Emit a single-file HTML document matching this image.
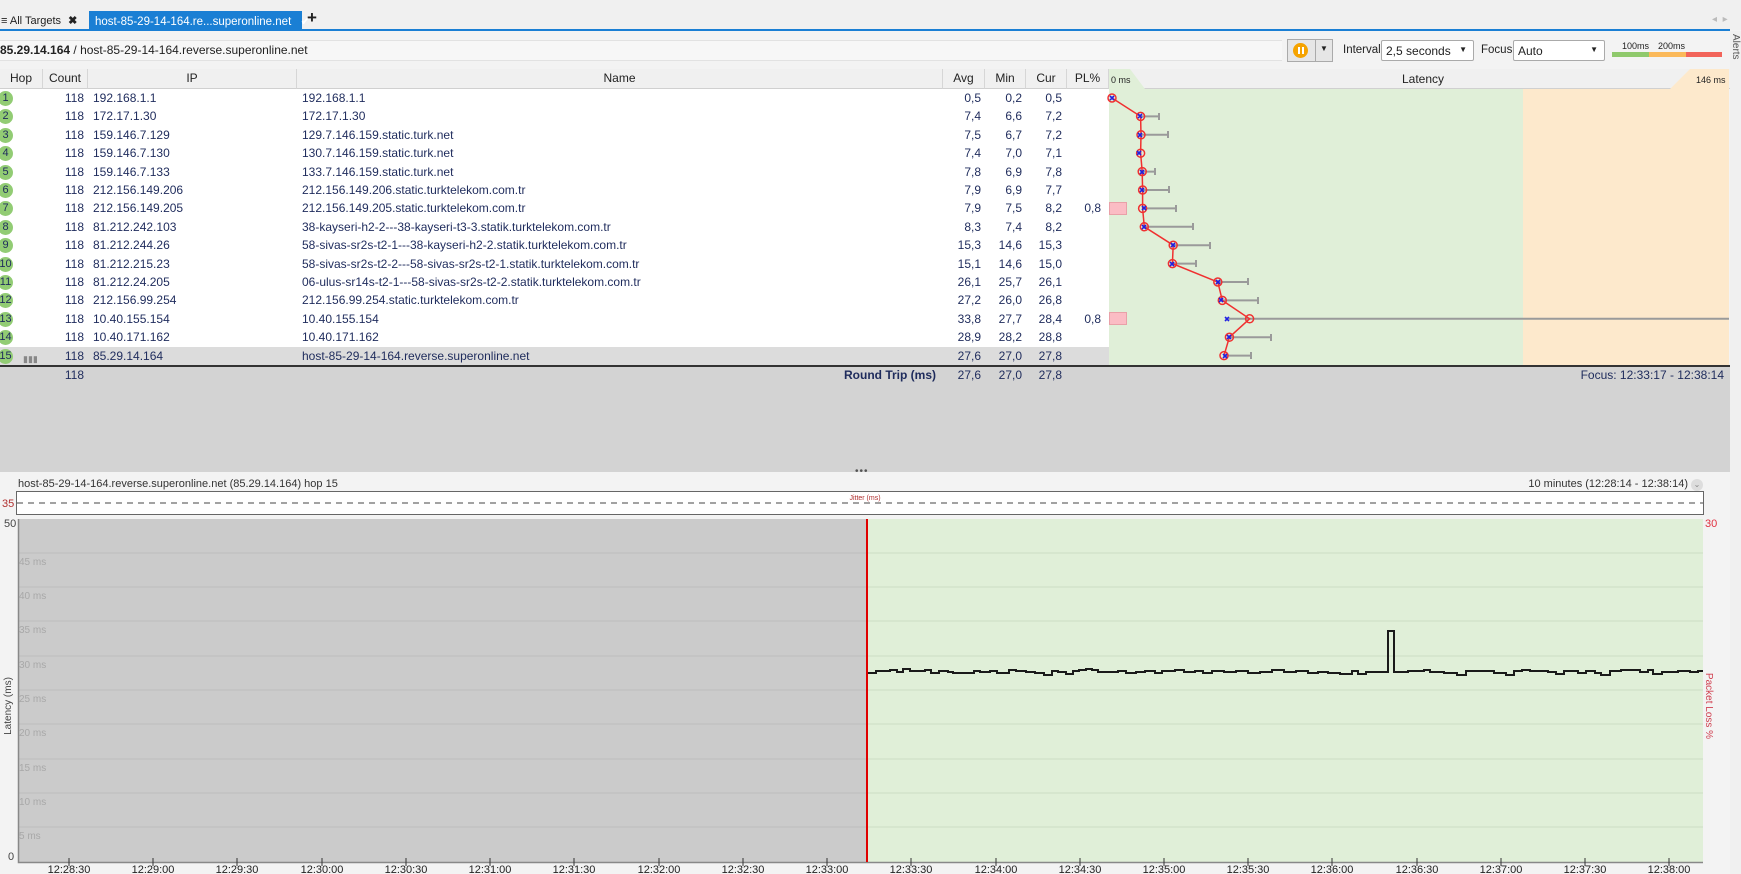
<!DOCTYPE html>
<html><head><meta charset="utf-8">
<style>
*{margin:0;padding:0;box-sizing:border-box}
body{width:1741px;height:874px;overflow:hidden;background:#f3f3f3;font-family:"Liberation Sans",sans-serif;font-size:12px;color:#1e2b5c;position:relative}
.a{position:absolute;white-space:nowrap}
.r{text-align:right}
.row{position:absolute;left:0;width:1109px;height:18.4px;background:#fff}
.row div{position:absolute;top:2px;line-height:14px}
.hop{left:-2px;top:2px!important;width:15px;height:15px;border-radius:8px;background:#92cc74;color:#1e2b5c;font-size:11px;line-height:15px!important;text-align:center}
.hd{position:absolute;top:69px;height:20px;background:#f0f0f0;border-right:1px solid #d6d6d6;border-bottom:1px solid #d0d0d0;color:#222;text-align:center;line-height:19px;font-size:12px}
</style></head><body>

<!-- tab bar -->
<div class="a" style="left:0;top:0;width:1741px;height:30px;background:#f0f0f0"></div>
<div class="a" style="left:0;top:29px;width:1730px;height:2px;background:#1a7fd4"></div>
<div class="a" style="left:1px;top:14px;color:#222;font-size:11px">≡ All Targets <b style="margin-left:4px">✖</b></div>
<div class="a" style="left:89px;top:11px;width:213px;height:19px;background:#1a7fd4;color:#fff;padding:3px 6px;font-size:11.5px">host-85-29-14-164.re...superonline.net <span style="margin-left:6px">✔</span></div>
<div class="a" style="left:307px;top:8px;font-size:17px;font-weight:bold;color:#222">+</div>
<div class="a" style="left:1712px;top:14px;color:#bbb;font-size:10px">◂ &nbsp;▸</div>

<!-- toolbar -->
<div class="a" style="left:0;top:40px;width:1282px;height:21px;background:#f7f7f7;border-top:1px solid #e2e2e2;border-bottom:1px solid #e2e2e2"></div>
<div class="a" style="left:0;top:43px;font-size:12px;color:#222"><b>85.29.14.164</b> / host-85-29-14-164.reverse.superonline.net</div>
<div class="a" style="left:1287px;top:39px;width:46px;height:23px;border:1px solid #aaa;background:#e6e6e6"></div>
<div class="a" style="left:1315px;top:39px;width:1px;height:23px;background:#aaa"></div>
<div class="a" style="left:1293px;top:43px;width:15px;height:15px;border-radius:8px;background:#f5a300"></div>
<div class="a" style="left:1298px;top:47px;width:2px;height:7px;background:#fff"></div>
<div class="a" style="left:1302px;top:47px;width:2px;height:7px;background:#fff"></div>
<div class="a" style="left:1320px;top:44px;font-size:8px;color:#222">▼</div>
<div class="a" style="left:1343px;top:44px;color:#222;font-size:11.5px">Interval</div>
<div class="a" style="left:1381px;top:40px;width:93px;height:21px;background:#fff;border:1px solid #aaa;border-radius:2px;padding:3px 4px;color:#222">2,5 seconds<span style="position:absolute;right:6px;top:4px;font-size:8px">▼</span></div>
<div class="a" style="left:1481px;top:44px;color:#222;font-size:11.5px">Focus</div>
<div class="a" style="left:1513px;top:40px;width:92px;height:21px;background:#fff;border:1px solid #aaa;border-radius:2px;padding:3px 4px;color:#222">Auto<span style="position:absolute;right:6px;top:4px;font-size:8px">▼</span></div>
<div class="a" style="left:1622px;top:41px;font-size:9px;color:#222">100ms</div>
<div class="a" style="left:1658px;top:41px;font-size:9px;color:#222">200ms</div>
<div class="a" style="left:1612px;top:52px;width:37px;height:5px;background:#8fc96c"></div>
<div class="a" style="left:1649px;top:52px;width:37px;height:5px;background:#fbb95a"></div>
<div class="a" style="left:1686px;top:52px;width:36px;height:5px;background:#f2645a"></div>
<div class="a" style="left:1730px;top:31px;width:11px;height:843px;background:#f0f0f0"></div>
<div class="a" style="left:1727px;top:34px;font-size:10px;color:#555;transform-origin:0 0;transform:translate(14px,0) rotate(90deg)">Alerts</div>

<!-- table headers -->
<div class="hd" style="left:0;width:43px">Hop</div>
<div class="hd" style="left:43px;width:45px">Count</div>
<div class="hd" style="left:88px;width:209px">IP</div>
<div class="hd" style="left:297px;width:646px">Name</div>
<div class="hd" style="left:943px;width:42px">Avg</div>
<div class="hd" style="left:985px;width:41px">Min</div>
<div class="hd" style="left:1026px;width:41px">Cur</div>
<div class="hd" style="left:1067px;width:42px">PL%</div>
<div class="hd" style="left:1109px;width:621px;background:#f0f0f0;border-right:none"></div>

<!-- graph bg -->
<svg class="a" style="left:0;top:0" width="1741" height="874">
<polygon points="1109,69 1130,69 1145,89 1109,89" fill="#e0efd8"/>
<polygon points="1690,69 1729,69 1729,89 1670,89" fill="#fde9cc"/>
<rect x="1109" y="89" width="414" height="276" fill="#e0efd8"/>
<rect x="1523" y="89" width="206" height="276" fill="#fde9cc"/>
</svg>
<div class="a" style="left:1111px;top:75px;font-size:9px;color:#222">0 ms</div>
<div class="a" style="left:1402px;top:72px;color:#222">Latency</div>
<div class="a" style="left:1696px;top:75px;font-size:9px;color:#222">146 ms</div>

<!-- rows -->
<div class="row" style="top:89px"><div class="hop">1</div><div class="r" style="left:43px;width:41px">118</div><div style="left:93px">192.168.1.1</div><div style="left:302px">192.168.1.1</div><div class="r" style="left:943px;width:38px">0,5</div><div class="r" style="left:985px;width:37px">0,2</div><div class="r" style="left:1026px;width:36px">0,5</div></div>
<div class="row" style="top:107.4px"><div class="hop">2</div><div class="r" style="left:43px;width:41px">118</div><div style="left:93px">172.17.1.30</div><div style="left:302px">172.17.1.30</div><div class="r" style="left:943px;width:38px">7,4</div><div class="r" style="left:985px;width:37px">6,6</div><div class="r" style="left:1026px;width:36px">7,2</div></div>
<div class="row" style="top:125.8px"><div class="hop">3</div><div class="r" style="left:43px;width:41px">118</div><div style="left:93px">159.146.7.129</div><div style="left:302px">129.7.146.159.static.turk.net</div><div class="r" style="left:943px;width:38px">7,5</div><div class="r" style="left:985px;width:37px">6,7</div><div class="r" style="left:1026px;width:36px">7,2</div></div>
<div class="row" style="top:144.2px"><div class="hop">4</div><div class="r" style="left:43px;width:41px">118</div><div style="left:93px">159.146.7.130</div><div style="left:302px">130.7.146.159.static.turk.net</div><div class="r" style="left:943px;width:38px">7,4</div><div class="r" style="left:985px;width:37px">7,0</div><div class="r" style="left:1026px;width:36px">7,1</div></div>
<div class="row" style="top:162.6px"><div class="hop">5</div><div class="r" style="left:43px;width:41px">118</div><div style="left:93px">159.146.7.133</div><div style="left:302px">133.7.146.159.static.turk.net</div><div class="r" style="left:943px;width:38px">7,8</div><div class="r" style="left:985px;width:37px">6,9</div><div class="r" style="left:1026px;width:36px">7,8</div></div>
<div class="row" style="top:181px"><div class="hop">6</div><div class="r" style="left:43px;width:41px">118</div><div style="left:93px">212.156.149.206</div><div style="left:302px">212.156.149.206.static.turktelekom.com.tr</div><div class="r" style="left:943px;width:38px">7,9</div><div class="r" style="left:985px;width:37px">6,9</div><div class="r" style="left:1026px;width:36px">7,7</div></div>
<div class="row" style="top:199.4px"><div class="hop">7</div><div class="r" style="left:43px;width:41px">118</div><div style="left:93px">212.156.149.205</div><div style="left:302px">212.156.149.205.static.turktelekom.com.tr</div><div class="r" style="left:943px;width:38px">7,9</div><div class="r" style="left:985px;width:37px">7,5</div><div class="r" style="left:1026px;width:36px">8,2</div><div class="r" style="left:1067px;width:34px">0,8</div></div>
<div class="row" style="top:217.8px"><div class="hop">8</div><div class="r" style="left:43px;width:41px">118</div><div style="left:93px">81.212.242.103</div><div style="left:302px">38-kayseri-h2-2---38-kayseri-t3-3.statik.turktelekom.com.tr</div><div class="r" style="left:943px;width:38px">8,3</div><div class="r" style="left:985px;width:37px">7,4</div><div class="r" style="left:1026px;width:36px">8,2</div></div>
<div class="row" style="top:236.2px"><div class="hop">9</div><div class="r" style="left:43px;width:41px">118</div><div style="left:93px">81.212.244.26</div><div style="left:302px">58-sivas-sr2s-t2-1---38-kayseri-h2-2.statik.turktelekom.com.tr</div><div class="r" style="left:943px;width:38px">15,3</div><div class="r" style="left:985px;width:37px">14,6</div><div class="r" style="left:1026px;width:36px">15,3</div></div>
<div class="row" style="top:254.6px"><div class="hop">10</div><div class="r" style="left:43px;width:41px">118</div><div style="left:93px">81.212.215.23</div><div style="left:302px">58-sivas-sr2s-t2-2---58-sivas-sr2s-t2-1.statik.turktelekom.com.tr</div><div class="r" style="left:943px;width:38px">15,1</div><div class="r" style="left:985px;width:37px">14,6</div><div class="r" style="left:1026px;width:36px">15,0</div></div>
<div class="row" style="top:273px"><div class="hop">11</div><div class="r" style="left:43px;width:41px">118</div><div style="left:93px">81.212.24.205</div><div style="left:302px">06-ulus-sr14s-t2-1---58-sivas-sr2s-t2-2.statik.turktelekom.com.tr</div><div class="r" style="left:943px;width:38px">26,1</div><div class="r" style="left:985px;width:37px">25,7</div><div class="r" style="left:1026px;width:36px">26,1</div></div>
<div class="row" style="top:291.4px"><div class="hop">12</div><div class="r" style="left:43px;width:41px">118</div><div style="left:93px">212.156.99.254</div><div style="left:302px">212.156.99.254.static.turktelekom.com.tr</div><div class="r" style="left:943px;width:38px">27,2</div><div class="r" style="left:985px;width:37px">26,0</div><div class="r" style="left:1026px;width:36px">26,8</div></div>
<div class="row" style="top:309.8px"><div class="hop">13</div><div class="r" style="left:43px;width:41px">118</div><div style="left:93px">10.40.155.154</div><div style="left:302px">10.40.155.154</div><div class="r" style="left:943px;width:38px">33,8</div><div class="r" style="left:985px;width:37px">27,7</div><div class="r" style="left:1026px;width:36px">28,4</div><div class="r" style="left:1067px;width:34px">0,8</div></div>
<div class="row" style="top:328.2px"><div class="hop">14</div><div class="r" style="left:43px;width:41px">118</div><div style="left:93px">10.40.171.162</div><div style="left:302px">10.40.171.162</div><div class="r" style="left:943px;width:38px">28,9</div><div class="r" style="left:985px;width:37px">28,2</div><div class="r" style="left:1026px;width:36px">28,8</div></div>
<div class="row" style="top:346.6px;background:#dcdcdc"><div class="hop">15</div><div style="left:23px;top:5px;font-size:9px;color:#888">▮▮▮</div><div class="r" style="left:43px;width:41px">118</div><div style="left:93px">85.29.14.164</div><div style="left:302px">host-85-29-14-164.reverse.superonline.net</div><div class="r" style="left:943px;width:38px">27,6</div><div class="r" style="left:985px;width:37px">27,0</div><div class="r" style="left:1026px;width:36px">27,8</div></div>

<!-- pink PL boxes -->
<div class="a" style="left:1109px;top:202px;width:18px;height:13px;background:#fbbcc4;border:1px solid #e9a0a8"></div>
<div class="a" style="left:1109px;top:312px;width:18px;height:13px;background:#fbbcc4;border:1px solid #e9a0a8"></div>

<!-- hop graph -->
<svg class="a" style="left:0;top:0" width="1741" height="874">
<g stroke="#9a9a9a" stroke-width="2">
<path d="M1140 116.4H1159M1159 113v7M1141 134.8H1168M1168 131v7M1142 171.6H1155M1155 168v7M1143 190H1169M1169 186v7M1143 208.4H1176M1176 205v7M1144 226.8H1193M1193 223v7M1173 245.2H1210M1210 242v7M1172 263.6H1196M1196 260v7M1218 282H1248M1248 278v7M1222 300.4H1258M1258 297v7M1250 318.8H1729M1229 318.8H1250M1229 337.2H1271M1271 334v7M1224 355.6H1251M1251 352v7"/>
</g>
<polyline fill="none" stroke="#f03030" stroke-width="1.5" points="1112,98 1140.6,116.4 1141,134.8 1140.6,153.2 1142.2,171.6 1142.6,190 1142.6,208.4 1144.3,226.8 1173.2,245.2 1172.4,263.6 1217.8,282 1222.3,300.4 1249.6,318.8 1229.4,337.2 1224,355.6"/>
<g fill="none" stroke="#f03030" stroke-width="1.5">
<circle cx="1112" cy="98" r="4"/><circle cx="1140.6" cy="116.4" r="4"/><circle cx="1141" cy="134.8" r="4"/><circle cx="1140.6" cy="153.2" r="4"/><circle cx="1142.2" cy="171.6" r="4"/><circle cx="1142.6" cy="190" r="4"/><circle cx="1142.6" cy="208.4" r="4"/><circle cx="1144.3" cy="226.8" r="4"/><circle cx="1173.2" cy="245.2" r="4"/><circle cx="1172.4" cy="263.6" r="4"/><circle cx="1217.8" cy="282" r="4"/><circle cx="1222.3" cy="300.4" r="4"/><circle cx="1249.6" cy="318.8" r="4"/><circle cx="1229.4" cy="337.2" r="4"/><circle cx="1224" cy="355.6" r="4"/>
</g>
<g stroke="#2020e0" stroke-width="1.6" fill="none">
<path d="M1110 96l4 4m0-4l-4 4M1138 114l4 4m0-4l-4 4M1138 133l4 4m0-4l-4 4M1137 151l4 4m0-4l-4 4M1140 170l4 4m0-4l-4 4M1140 188l4 4m0-4l-4 4M1142 206l4 4m0-4l-4 4M1142 225l4 4m0-4l-4 4M1171 243l4 4m0-4l-4 4M1170 262l4 4m0-4l-4 4M1216 280l4 4m0-4l-4 4M1219 298l4 4m0-4l-4 4M1225 317l4 4m0-4l-4 4M1227 335l4 4m0-4l-4 4M1223 354l4 4m0-4l-4 4"/>
</g>
</svg>

<!-- footer & gray area -->
<div class="a" style="left:0;top:365px;width:1730px;height:107px;background:#d3d3d3;border-top:2px solid #333"></div>
<div class="a r" style="left:43px;top:368px;width:41px">118</div>
<div class="a r" style="left:700px;top:368px;width:236px;font-weight:bold">Round Trip (ms)</div>
<div class="a r" style="left:943px;top:368px;width:38px">27,6</div>
<div class="a r" style="left:985px;top:368px;width:37px">27,0</div>
<div class="a r" style="left:1026px;top:368px;width:36px">27,8</div>
<div class="a r" style="left:1400px;top:368px;width:324px">Focus: 12:33:17 - 12:38:14</div>
<div class="a" style="left:855px;top:466px;color:#555;font-size:10px;letter-spacing:1px">•••</div>

<!-- lower chart -->
<div class="a" style="left:18px;top:478px;font-size:11px;color:#333">host-85-29-14-164.reverse.superonline.net (85.29.14.164) hop 15</div>
<div class="a r" style="left:1400px;top:478px;width:288px;font-size:11px;color:#333">10 minutes (12:28:14 - 12:38:14)</div>
<div class="a" style="left:1691px;top:479px;width:12px;height:12px;border-radius:6px;background:#ddd;color:#888;font-size:8px;text-align:center;line-height:12px">⌄</div>
<svg class="a" style="left:0;top:0" width="1741" height="874">
<rect x="16.5" y="491.5" width="1687" height="23" fill="#fff" stroke="#666"/>
<line x1="17" y1="503" x2="1703" y2="503" stroke="#444" stroke-dasharray="6,5"/>
<text x="2" y="507" font-size="11" fill="#b03030" font-family="Liberation Sans,sans-serif">35</text>
<text x="865" y="500" font-size="7" fill="#b03030" text-anchor="middle" font-family="Liberation Sans,sans-serif">Jitter (ms)</text>
<rect x="18" y="519" width="849" height="343" fill="#cbcbcb"/>
<rect x="867" y="519" width="836" height="343" fill="#e0efd8"/>
<g stroke-width="1">
<path stroke="#bdbdbd" d="M18 553H867M18 587H867M18 621H867M18 656H867M18 690H867M18 724H867M18 759H867M18 793H867M18 827H867"/>
<path stroke="#cbdcc3" d="M867 553H1703M867 587H1703M867 621H1703M867 656H1703M867 690H1703M867 724H1703M867 759H1703M867 793H1703M867 827H1703"/>
</g>
<g font-size="10" fill="#a8a8a8" font-family="Liberation Sans,sans-serif">
<text x="19" y="565">45 ms</text><text x="19" y="599">40 ms</text><text x="19" y="633">35 ms</text><text x="19" y="668">30 ms</text><text x="19" y="702">25 ms</text><text x="19" y="736">20 ms</text><text x="19" y="771">15 ms</text><text x="19" y="805">10 ms</text><text x="19" y="839">5 ms</text>
</g>
<path d="M18.5 519V862.5H1703" fill="none" stroke="#888" stroke-width="1.5"/>
<line x1="867" y1="519" x2="867" y2="862" stroke="#e00000" stroke-width="2"/>
<path fill="none" stroke="#1a1a1a" stroke-width="2" d="M868 673H876V671H890V670H897V672H903V669H910V671H925V670H931V673H939V671H948V672H953V673H974V671H980V672H990V671H997V673H1009V670H1016V671H1026V672H1035V673H1044V675H1052V671H1058V672H1066V674H1073V671H1079V670H1086V669H1092V670H1098V672H1118V671H1126V673H1136V672H1145V671H1155V673H1162V671H1175V670H1184V672H1195V671H1203V673H1212V671H1224V672H1236V671H1248V673H1260V672H1272V670H1284V672H1296V671H1308V673H1318V672H1328V673H1340V674H1352V671H1358V674H1366V672H1388V631H1394V672H1408V671H1424V670H1430V672H1444V673H1457V675H1466V671H1494V673H1506V675H1514V671H1522V670H1530V671H1548V672H1556V674H1564V671H1578V673H1586V671H1595V673H1601V675H1610V671H1621V670H1640V672H1648V670H1653V674H1662V672H1678V671H1690V672H1698V671H1703"/>
<g stroke="#333">
<path d="M69 858v8M153 858v8M237 858v8M322 858v8M406 858v8M490 858v8M574 858v8M659 858v8M743 858v8M827 858v8M911 858v8M996 858v8M1080 858v8M1164 858v8M1248 858v8M1332 858v8M1417 858v8M1501 858v8M1585 858v8M1669 858v8"/>
</g>
<g font-size="11" fill="#222" text-anchor="middle" font-family="Liberation Sans,sans-serif">
<text x="69" y="873">12:28:30</text><text x="153" y="873">12:29:00</text><text x="237" y="873">12:29:30</text><text x="322" y="873">12:30:00</text><text x="406" y="873">12:30:30</text><text x="490" y="873">12:31:00</text><text x="574" y="873">12:31:30</text><text x="659" y="873">12:32:00</text><text x="743" y="873">12:32:30</text><text x="827" y="873">12:33:00</text><text x="911" y="873">12:33:30</text><text x="996" y="873">12:34:00</text><text x="1080" y="873">12:34:30</text><text x="1164" y="873">12:35:00</text><text x="1248" y="873">12:35:30</text><text x="1332" y="873">12:36:00</text><text x="1417" y="873">12:36:30</text><text x="1501" y="873">12:37:00</text><text x="1585" y="873">12:37:30</text><text x="1669" y="873">12:38:00</text>
</g>
<g font-size="11" font-family="Liberation Sans,sans-serif">
<text x="4" y="527" fill="#444">50</text>
<text x="8" y="860" fill="#444">0</text>
<text x="1705" y="527" fill="#e03040">30</text>
<text transform="translate(11,706) rotate(-90)" fill="#444" font-size="10" text-anchor="middle">Latency (ms)</text>
<text transform="translate(1706,706) rotate(90)" fill="#d04050" font-size="10" text-anchor="middle">Packet Loss %</text>
</g>
</svg>
</body></html>
